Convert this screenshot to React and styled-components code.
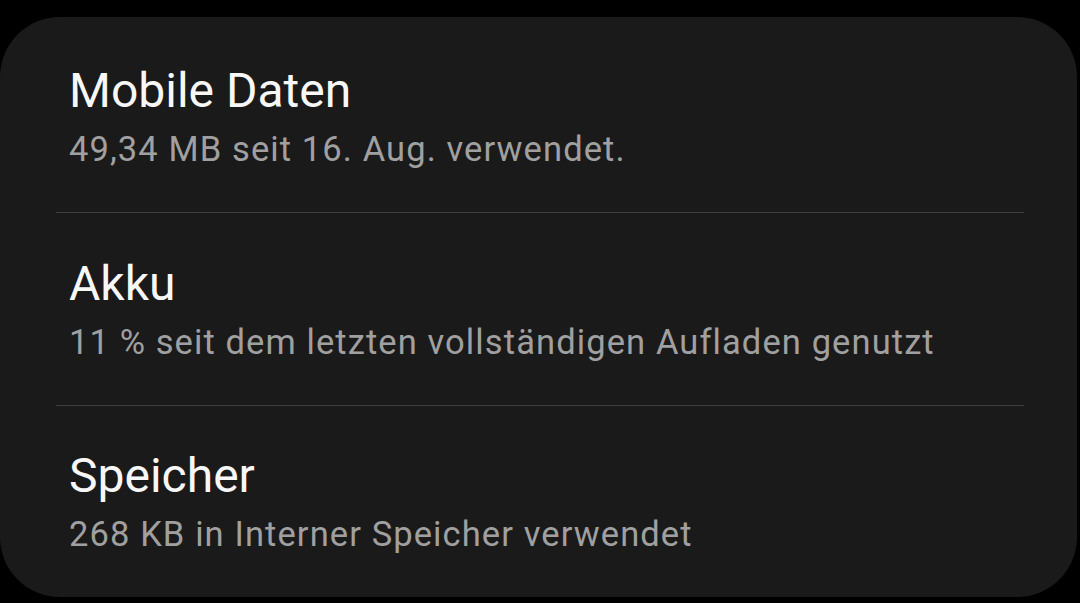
import React from "react";
import styled, { createGlobalStyle } from "styled-components";

const Global = createGlobalStyle`
  html, body {
    margin: 0;
    padding: 0;
    background: #000;
  }
  body {
    font-family: Roboto, "Noto Sans", "Liberation Sans", sans-serif;
  }
`;

const Screen = styled.div`
  width: 1080px;
  height: 603px;
  background: #000;
  padding-top: 17px;
  box-sizing: border-box;
  overflow: hidden;
`;

const Card = styled.div`
  width: 1077px;
  height: 580px;
  background: #1a1a1a;
  border-radius: 60px;
  padding-top: 3px;
  box-sizing: border-box;
  display: flex;
  flex-direction: column;
`;

const Row = styled.div`
  padding: 43px 40px 43px 69px;
  display: flex;
  flex-direction: column;
`;

const Title = styled.div`
  font-size: 48px;
  line-height: 56px;
  color: #f7f7f7;
  font-weight: 400;
`;

const Subtitle = styled.div`
  margin-top: 10px;
  font-size: 34.5px;
  line-height: 40px;
  letter-spacing: 1.1px;
  color: #a0a0a0;
  font-weight: 400;
`;

const Divider = styled.div`
  height: 2px;
  margin: 0 53px 0 56px;
  background: #3d3d3d;
`;

const items = [
  { title: "Mobile Daten", sub: "49,34 MB seit 16. Aug. verwendet." },
  { title: "Akku", sub: "11 % seit dem letzten vollständigen Aufladen genutzt" },
  { title: "Speicher", sub: "268 KB in Interner Speicher verwendet" },
];

export default function App() {
  return (
    <>
      <Global />
      <Screen>
        <Card>
          {items.map((it, i) => (
            <React.Fragment key={it.title}>
              {i > 0 && <Divider />}
              <Row>
                <Title>{it.title}</Title>
                <Subtitle>{it.sub}</Subtitle>
              </Row>
            </React.Fragment>
          ))}
        </Card>
      </Screen>
    </>
  );
}
